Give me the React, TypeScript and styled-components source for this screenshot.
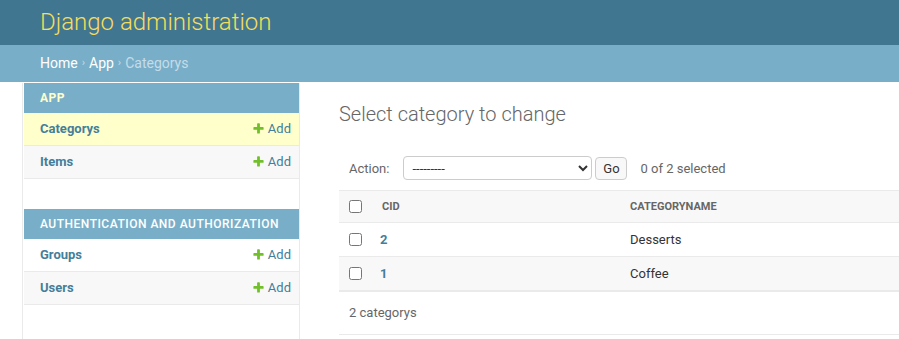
import React from 'react'
import styled, { createGlobalStyle } from 'styled-components'

const primary = '#79aec8'
const secondary = '#417690'
const linkColor = '#447e9b'
const hairline = '#eaeaea'
const darkened = '#f8f8f8'

const GlobalStyle = createGlobalStyle`
  html, body {
    margin: 0;
    padding: 0;
    background: #fff;
  }
  body {
    font-family: Roboto, "Lucida Grande", "DejaVu Sans", sans-serif;
    font-size: 14px;
    color: #333;
    overflow: hidden;
  }
  * { box-sizing: border-box; }
`

const Page = styled.div`
  display: flex;
  flex-direction: column;
  min-height: 339px;
`

const Header = styled.header`
  height: 45px;
  background: ${secondary};
  padding: 0 40px 2px;
  display: flex;
  align-items: center;
`

const Branding = styled.h1`
  margin: 0;
  font-size: 24px;
  font-weight: 300;
  color: #f5dd5d;
`

const Breadcrumbs = styled.div`
  height: 37px;
  background: ${primary};
  padding: 0 40px 2px;
  display: flex;
  align-items: center;
  font-size: 14px;
  color: #c4dce8;
  gap: 4px;
`

const Crumb = styled.a`
  color: #fff;
  text-decoration: none;
`

const Sep = styled.span`
  font-size: 11px;
`

const Main = styled.div`
  display: flex;
  flex: 1;
  border-top: 1px solid #fff;
`

const Toggle = styled.div`
  width: 23px;
  flex: none;
  border-right: 1px solid ${hairline};
`

const Sidebar = styled.nav`
  width: 277px;
  flex: none;
  border-right: 1px solid ${hairline};
  padding-left: 1px;
`

const Module = styled.div`
  margin-bottom: 30px;
`

const Caption = styled.div<{ $current?: boolean }>`
  height: 30px;
  background: ${primary};
  padding: 0 16px;
  display: flex;
  align-items: center;
  font-size: 12px;
  letter-spacing: 0.5px;
  white-space: nowrap;
  text-transform: uppercase;
  font-weight: ${p => (p.$current ? 700 : 500)};
  color: ${p => (p.$current ? '#ffc' : '#fff')};
`

const ModelRow = styled.div<{ $bg: string }>`
  height: 33px;
  background: ${p => p.$bg};
  border-bottom: 1px solid ${hairline};
  display: flex;
  align-items: center;
  justify-content: space-between;
  padding: 0 8px 2px 16px;
  font-size: 13px;
`

const ModelName = styled.a`
  color: ${linkColor};
  font-weight: 700;
  text-decoration: none;
`

const AddLink = styled.a`
  display: flex;
  align-items: center;
  gap: 3px;
  color: ${linkColor};
  text-decoration: none;
`

const Content = styled.div`
  flex: 1;
  padding: 19px 0 0 39px;
  min-width: 0;
`

const Title = styled.h1`
  margin: 0 0 20px;
  font-size: 20px;
  line-height: 24px;
  font-weight: 300;
  color: #666;
`

const Actions = styled.div`
  display: flex;
  align-items: center;
  padding: 10px 10px;
  font-size: 13px;
  color: #666;
`

const ActionLabel = styled.label`
  margin-right: 14px;
`

const Select = styled.select`
  width: 189px;
  height: 24px;
  border: 1px solid #ccc;
  border-radius: 4px;
  font-family: Roboto, sans-serif;
  font-size: 13px;
  color: #333;
  background: #fff;
  padding: 0 4px;
`

const GoButton = styled.button`
  margin-left: 3px;
  width: 32px;
  height: 23px;
  border: 1px solid #ccc;
  border-radius: 4px;
  background: ${darkened};
  font-family: Roboto, sans-serif;
  font-size: 13px;
  color: #333;
  padding: 0;
`

const Counter = styled.span`
  margin-left: 13px;
`

const Table = styled.table`
  width: 620px;
  border-collapse: collapse;
  table-layout: fixed;
`

const HeadRow = styled.tr`
  background: ${darkened};
  border-top: 1px solid ${hairline};
  border-bottom: 1px solid ${hairline};
`

const Th = styled.th<{ $w?: number }>`
  width: ${p => (p.$w ? `${p.$w}px` : 'auto')};
  height: 32px;
  padding: 0 10px;
  text-align: left;
  font-size: 11px;
  font-weight: 700;
  text-transform: uppercase;
  color: #666;
`

const Row = styled.tr<{ $bg: string }>`
  background: ${p => p.$bg};
  border-bottom: 1px solid ${hairline};
`

const LastRow = styled(Row)`
  border-bottom: 2px solid ${hairline};
`

const Td = styled.td`
  height: 34px;
  padding: 0 10px;
  font-size: 13px;
  color: #333;
`

const CheckCell = styled.td`
  height: 34px;
  padding: 0 10px;
`

const Check = styled.input`
  margin: 0;
  display: block;
  width: 13px;
  height: 13px;
`

const IdLink = styled.a`
  color: ${linkColor};
  font-weight: 700;
  text-decoration: none;
  margin-left: -2px;
`

const Paginator = styled.p`
  margin: 0;
  width: 620px;
  height: 43px;
  padding: 0 10px;
  display: flex;
  align-items: center;
  font-size: 13px;
  color: #666;
  border-bottom: 1px solid ${hairline};
`

const PlusIcon = () => (
  <svg width="13" height="13" viewBox="0 0 1792 1792">
    <path
      fill="#70bf2b"
      d="M1600 796v192q0 40-28 68t-68 28h-416v416q0 40-28 68t-68 28h-192q-40 0-68-28t-28-68v-416h-416q-40 0-68-28t-28-68v-192q0-40 28-68t68-28h416v-416q0-40 28-68t68-28h192q40 0 68 28t28 68v416h416q40 0 68 28t28 68z"
    />
  </svg>
)

const modules = [
  { name: 'App', current: true, models: ['Categorys', 'Items'] },
  { name: 'Authentication and Authorization', current: false, models: ['Groups', 'Users'] },
]

const categories = [
  { id: 2, name: 'Desserts' },
  { id: 1, name: 'Coffee' },
]

export default function App() {
  return (
    <Page>
      <GlobalStyle />
      <Header>
        <Branding>Django administration</Branding>
      </Header>
      <Breadcrumbs>
        <Crumb href="#">Home</Crumb>
        <Sep>›</Sep>
        <Crumb href="#">App</Crumb>
        <Sep>›</Sep>
        <span>Categorys</span>
      </Breadcrumbs>
      <Main>
        <Toggle />
        <Sidebar>
          {modules.map(m => (
            <Module key={m.name}>
              <Caption $current={m.current}>{m.name}</Caption>
              {m.models.map((model, i) => {
                const bg = m.current && i === 0 ? '#ffc' : i % 2 ? darkened : '#fff'
                return (
                  <ModelRow key={model} $bg={bg}>
                    <ModelName href="#">{model}</ModelName>
                    <AddLink href="#">
                      <PlusIcon />
                      Add
                    </AddLink>
                  </ModelRow>
                )
              })}
            </Module>
          ))}
        </Sidebar>
        <Content>
          <Title>Select category to change</Title>
          <Actions>
            <ActionLabel>Action:</ActionLabel>
            <Select defaultValue="">
              <option value="">---------</option>
              <option value="delete">Delete selected categorys</option>
            </Select>
            <GoButton>Go</GoButton>
            <Counter>0 of 2 selected</Counter>
          </Actions>
          <Table>
            <thead>
              <HeadRow>
                <Th $w={33}>
                  <Check type="checkbox" />
                </Th>
                <Th $w={248}>Cid</Th>
                <Th>Categoryname</Th>
              </HeadRow>
            </thead>
            <tbody>
              {categories.map((c, i) => {
                const RowEl = i === categories.length - 1 ? LastRow : Row
                return (
                  <RowEl key={c.id} $bg={i % 2 ? darkened : '#fff'}>
                    <CheckCell>
                      <Check type="checkbox" />
                    </CheckCell>
                    <Td>
                      <IdLink href="#">{c.id}</IdLink>
                    </Td>
                    <Td>{c.name}</Td>
                  </RowEl>
                )
              })}
            </tbody>
          </Table>
          <Paginator>2 categorys</Paginator>
        </Content>
      </Main>
    </Page>
  )
}
